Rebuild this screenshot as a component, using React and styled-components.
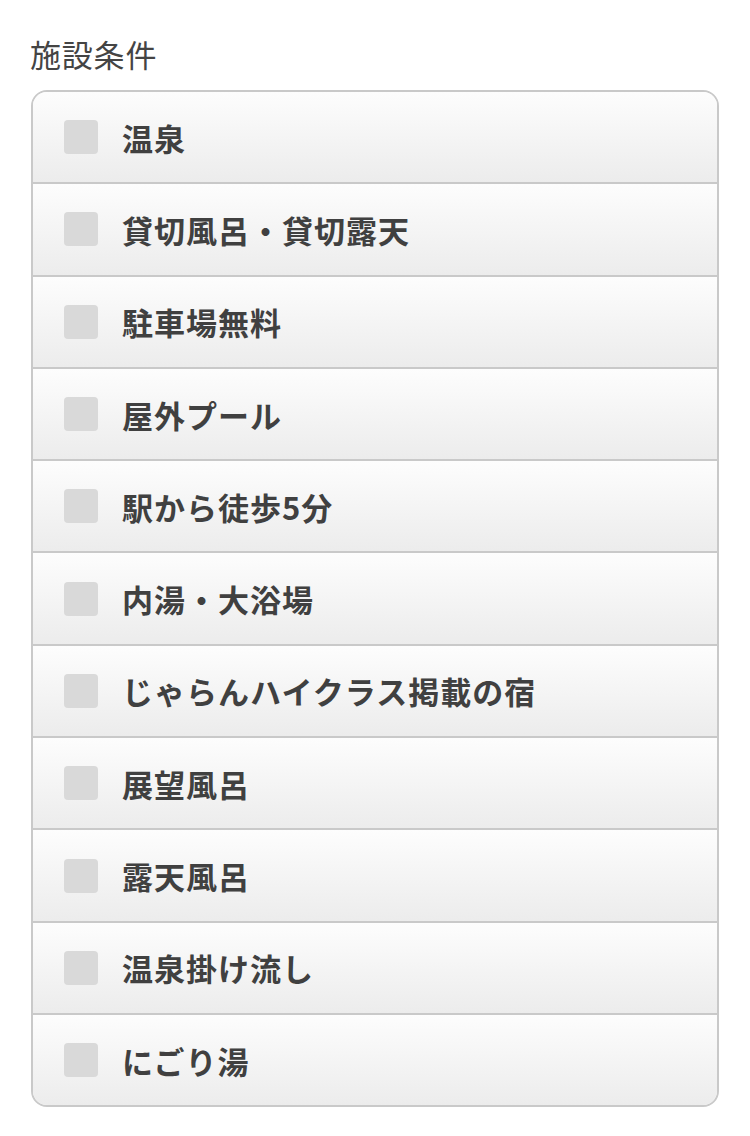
import styled, { createGlobalStyle } from "styled-components"

const GlobalStyle = createGlobalStyle`
body {
  margin: 0;
  background: #ffffff;
  font-family: "Noto Sans CJK JP", "Noto Sans", sans-serif;
}
`

const Page = styled.div`
padding: 31px 31px 30px 31px;
`

const Title = styled.h2`
margin: 0 0 13px -1px;
font-size: 31px;
line-height: 46px;
font-weight: 400;
color: #444444;
letter-spacing: 0.8px;
`

const List = styled.ul`
list-style: none;
margin: 0;
padding: 0;
border: 2px solid #c9c9c9;
border-radius: 16px;
overflow: hidden;
`

const Row = styled.li`
display: flex;
align-items: center;
gap: 24px;
height: 90.3px;
padding-left: 31px;
background: linear-gradient(#fdfdfd, #ececec);
border-bottom: ${(p) => (p.$last ? "none" : "2px solid #c9c9c9")};
cursor: pointer;
`

const Box = styled.span`
width: 34px;
height: 34px;
border-radius: 4px;
background: #d9d9d9;
flex-shrink: 0;
`

const Label = styled.span`
font-size: 31px;
font-weight: 700;
color: #404040;
letter-spacing: 1px;
`

const items = [
  "温泉",
  "貸切風呂・貸切露天",
  "駐車場無料",
  "屋外プール",
  "駅から徒歩5分",
  "内湯・大浴場",
  "じゃらんハイクラス掲載の宿",
  "展望風呂",
  "露天風呂",
  "温泉掛け流し",
  "にごり湯",
]

const App = () => {
  return (
    <Page>
      <GlobalStyle />
      <Title>施設条件</Title>
      <List>
        {items.map((item, i) => (
          <Row key={item} $last={i === items.length - 1}>
            <Box />
            <Label>{item}</Label>
          </Row>
        ))}
      </List>
    </Page>
  )
}

export default App
